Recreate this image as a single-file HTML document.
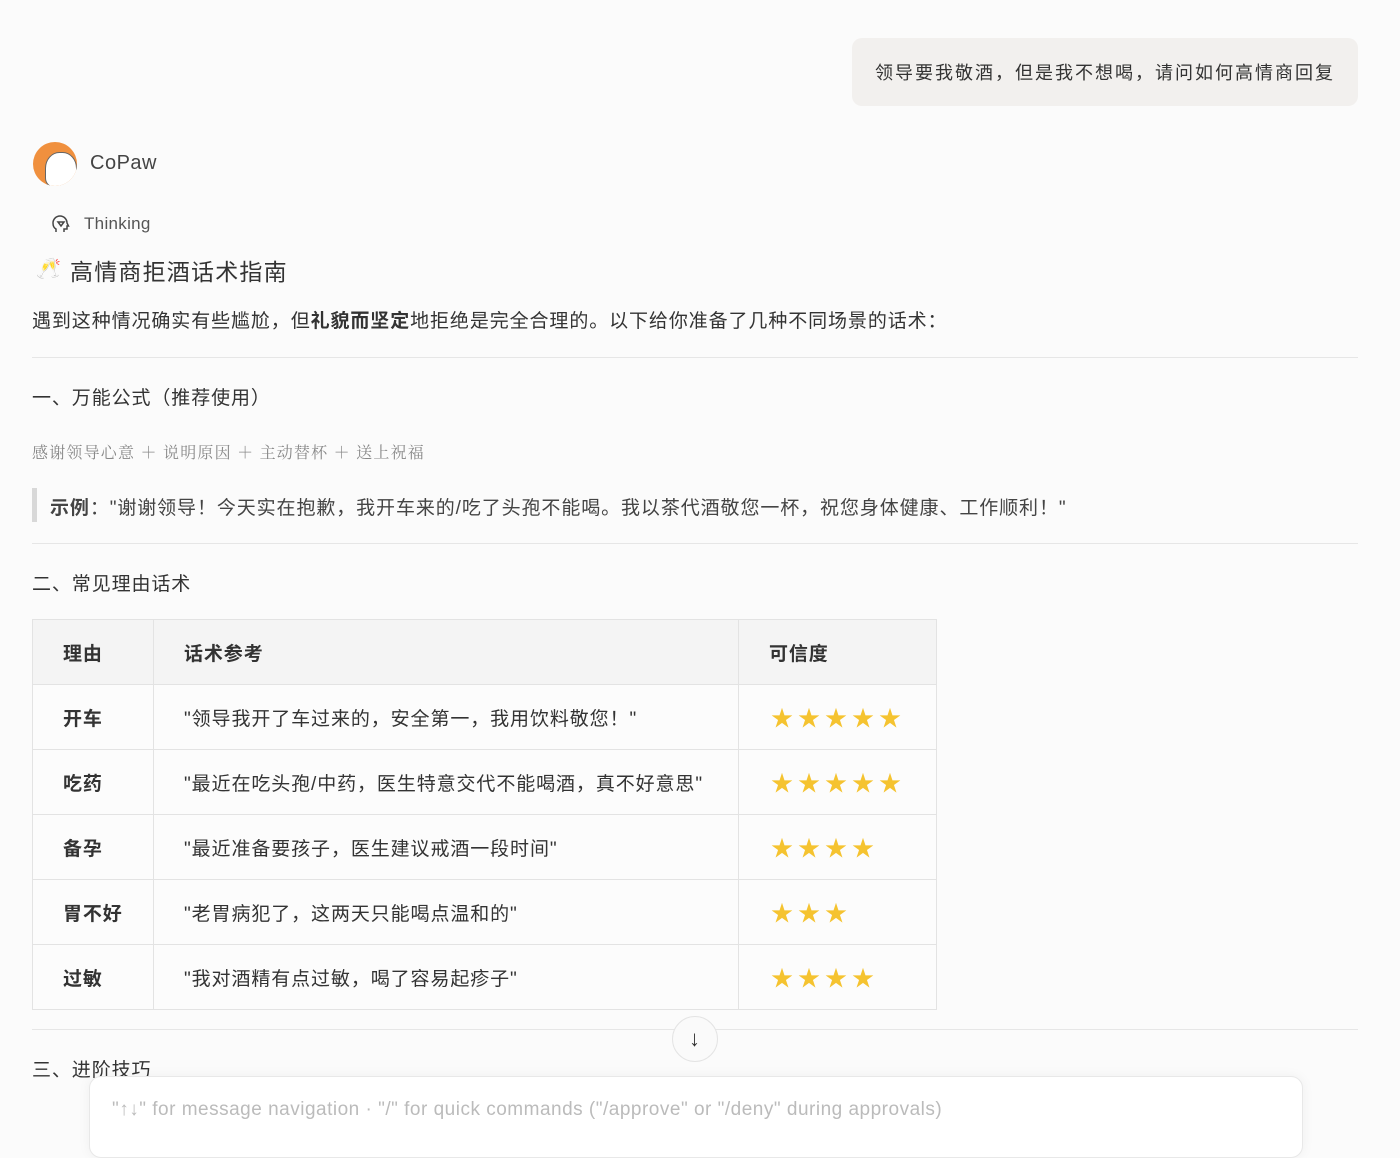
<!DOCTYPE html>
<html><head><meta charset="utf-8"><style>
body{margin:0;width:1400px;height:1143px;background:#fbfbfb;font-family:"Liberation Sans","Noto Sans CJK SC",sans-serif;color:#333;position:relative;overflow:hidden;letter-spacing:0.9px}
.a{position:absolute;white-space:nowrap}
.bubble{left:852px;top:38px;width:506px;height:68px;background:#f2f0ee;border-radius:10px;font-size:18px;line-height:70px;text-indent:23px;color:#333;letter-spacing:2px}
.hr{position:absolute;left:32px;width:1326px;height:1px;background:#e6e6e6}
table{position:absolute;left:32px;top:619px;border-collapse:collapse;font-size:19px}
td{border:1px solid #e3e3e3;height:64px;padding:0 0 0 30px;background:#fcfcfc}
tr:first-child td{background:#f4f4f4;font-weight:bold}
td:first-child{font-weight:bold}
.s{color:#f5c330;font-size:22px;letter-spacing:5px;padding-left:32px}
</style></head><body>
<div class="a bubble">领导要我敬酒，但是我不想喝，请问如何高情商回复</div>
<div class="a" style="left:33px;top:142px;width:44px;height:44px;border-radius:50%;background:#f0903e;overflow:hidden"><div style="position:absolute;left:12px;top:10px;width:30px;height:34px;background:#fff;border-radius:45% 45% 10px 10px;border:1px solid #666"></div></div>
<div class="a" style="left:90px;top:152px;font-size:20px;color:#444;letter-spacing:0.5px">CoPaw</div>
<svg class="a" style="left:51px;top:214px" width="20" height="20" viewBox="0 0 20 20" fill="none" stroke="#444" stroke-width="1.5"><path d="M5 18v-3c-2-1-3-3-3-6a7 7 0 0114 0l1.5 3H16v3h-3v3"/><path d="M7 8h6l-3 4z"/></svg>
<div class="a" style="left:84px;top:214px;font-size:17px;color:#555;letter-spacing:0.3px">Thinking</div>
<div class="a" style="left:36px;top:256px;font-size:20px">🥂</div>
<div class="a" style="left:70px;top:253px;font-size:23px;color:#333;letter-spacing:1.2px">高情商拒酒话术指南</div>
<div class="a" style="left:32px;top:306px;font-size:19px">遇到这种情况确实有些尴尬，但<b>礼貌而坚定</b>地拒绝是完全合理的。以下给你准备了几种不同场景的话术：</div>
<div class="hr" style="top:357px"></div>
<div class="a" style="left:32px;top:383px;font-size:19px">一、万能公式（推荐使用）</div>
<div class="a" style="left:32px;top:440px;font-size:16px;color:#888;font-family:'Noto Serif CJK SC',serif;letter-spacing:1.2px">感谢领导心意 ＋ 说明原因 ＋ 主动替杯 ＋ 送上祝福</div>
<div class="a" style="left:32px;top:488px;width:5px;height:34px;background:#d8d8d8"></div>
<div class="a" style="left:50px;top:493px;font-size:19px;color:#444"><b>示例</b>："谢谢领导！今天实在抱歉，我开车来的/吃了头孢不能喝。我以茶代酒敬您一杯，祝您身体健康、工作顺利！"</div>
<div class="hr" style="top:543px"></div>
<div class="a" style="left:32px;top:569px;font-size:19px">二、常见理由话术</div>
<table>
<tr><td style="width:90px">理由</td><td style="width:554px">话术参考</td><td style="width:167px">可信度</td></tr>
<tr><td>开车</td><td>"领导我开了车过来的，安全第一，我用饮料敬您！"</td><td class="s">★★★★★</td></tr>
<tr><td>吃药</td><td>"最近在吃头孢/中药，医生特意交代不能喝酒，真不好意思"</td><td class="s">★★★★★</td></tr>
<tr><td>备孕</td><td>"最近准备要孩子，医生建议戒酒一段时间"</td><td class="s">★★★★</td></tr>
<tr><td>胃不好</td><td>"老胃病犯了，这两天只能喝点温和的"</td><td class="s">★★★</td></tr>
<tr><td>过敏</td><td>"我对酒精有点过敏，喝了容易起疹子"</td><td class="s">★★★★</td></tr>
</table>
<div class="hr" style="top:1029px"></div>
<div class="a" style="left:32px;top:1055px;font-size:19px">三、进阶技巧</div>
<div class="a" style="left:672px;top:1016px;width:44px;height:44px;border-radius:50%;background:#fafafa;border:1px solid #e4e4e4;text-align:center;line-height:44px;font-size:22px;color:#333">↓</div>
<div class="a" style="left:89px;top:1076px;width:1212px;height:80px;background:#fff;border:1px solid #e8e8e8;border-radius:12px;box-shadow:0 0 12px rgba(0,0,0,.05)"></div>
<div class="a" style="left:112px;top:1099px;font-size:19px;color:#bbb;letter-spacing:0.5px">"↑↓" for message navigation · "/" for quick commands ("/approve" or "/deny" during approvals)</div>
</body></html>
